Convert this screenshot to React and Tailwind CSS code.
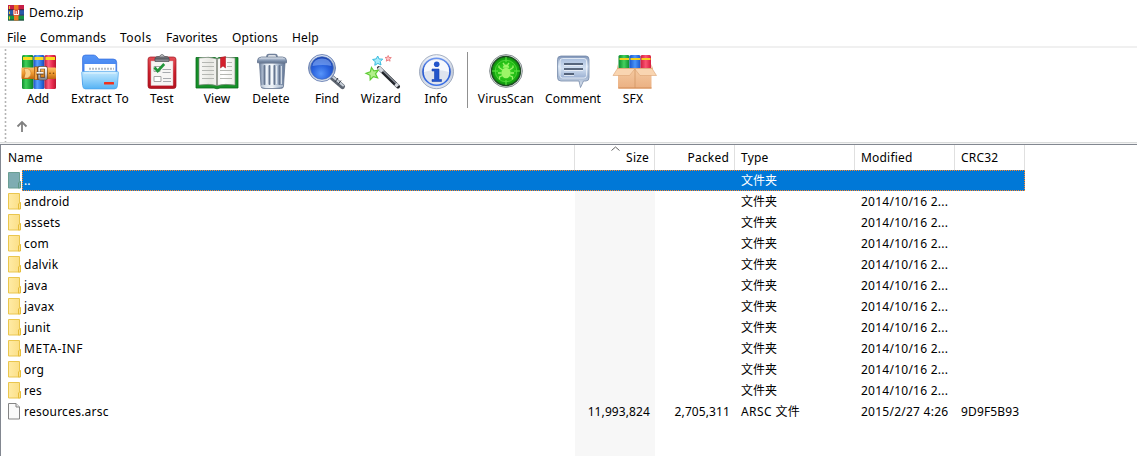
import React from 'react';

const Stops = ({ id, colors, h }) => (
  <linearGradient id={id} x1="0" y1="0" x2={h ? '1' : '0'} y2={h ? '0' : '1'}>
    {colors.map((c, i) => (
      <stop key={i} offset={i / (colors.length - 1)} stopColor={c} />
    ))}
  </linearGradient>
);

const Icon = ({ children }) => (
  <svg width="44" height="37" viewBox="0 0 44 37" className="block shrink-0 overflow-visible">
    {children}
  </svg>
);

const AddIcon = () => (
  <Icon>
    <defs>
      <Stops id="ag" h colors={['#0f8a2c', '#3fd05a', '#22ab3e', '#0b7a26']} />
      <Stops id="ab" h colors={['#1b4fc5', '#5aa2fa', '#2f78e8', '#1746b0']} />
      <Stops id="ar" h colors={['#c0183a', '#fa6080', '#ea2c50', '#b8142f']} />
      <Stops id="abelt" colors={['#fbc069', '#ee9a30', '#bd650f']} />
      <Stops id="asil" colors={['#ffffff', '#d5d8de', '#8b8e98']} />
    </defs>
    <rect x="6" y="2" width="11.5" height="34" rx="1.5" fill="url(#ag)" />
    <rect x="17.5" y="2" width="11" height="34" rx="1.5" fill="url(#ab)" />
    <rect x="28.5" y="2" width="11.5" height="34" rx="1.5" fill="url(#ar)" />
    <path d="M7 5.500h9.500M18.500 5.500h9M29.500 5.500h9.500" stroke="#f9dc1f" strokeWidth="3" />
    <rect x="5.500" y="14.500" width="34.500" height="11.500" rx="1" fill="url(#abelt)" />
    <path d="M8 15.500h3.500q3.500 1 3.500 4.700t-3.500 4.800h-3.500q2.500-4.800 0-9.500z" fill="#fbd08a" stroke="#c9741c" strokeWidth=".5" />
    <rect x="18" y="13.500" width="5" height="13.500" rx="1" fill="#9b500d" />
    <rect x="18.700" y="14" width="2.300" height="12.500" rx=".8" fill="#f2a544" />
    <rect x="23.300" y="14.700" width="6.700" height="11" rx=".5" fill="none" stroke="#5b4127" strokeWidth="3.200" />
    <rect x="23.300" y="14.700" width="6.700" height="11" rx=".5" fill="none" stroke="url(#asil)" strokeWidth="2" />
    <path d="M20.500 20.200h7" stroke="#6a4a2a" strokeWidth="3" />
    <path d="M20.500 19.800h7" stroke="#f4f5f7" strokeWidth="1.600" />
    <circle cx="34" cy="20.200" r=".8" fill="#7b3f0a" />
    <circle cx="37.500" cy="20.200" r=".8" fill="#7b3f0a" />
  </Icon>
);

const ExtractIcon = () => (
  <Icon>
    <defs>
      <Stops id="eb" colors={['#5797f7', '#2c6be6']} />
      <Stops id="ef" colors={['#c4e8fd', '#8fd0fa', '#55b2f4']} />
    </defs>
    <path d="M4.500 5q0-3 3-3h8q2 0 3.200 1.600l2 2.400h14.500q3.500 0 3.500 3.500v22h-34z" fill="url(#eb)" stroke="#255fd6" strokeWidth=".6" />
    <rect x="6.500" y="11" width="31" height="12" fill="#fff" />
    <path d="M11 15.700h25" stroke="#b3bac2" strokeWidth="2" strokeDasharray="2 1" />
    <path d="M4.500 18.500h4.500l2.500-.1h28q1 0 .9 1.500l-1 13q-.2 3-3 3h-29q-2.500 0-2.700-3l-1-13q0-1.400.8-1.400z" fill="url(#ef)" stroke="#4ba4ec" strokeWidth=".7" />
    <path d="M6 20h32" stroke="#e2f5ff" strokeWidth="1" />
    <rect x="26" y="29" width="10" height="2.600" rx=".5" fill="#f0321c" />
  </Icon>
);

const TestIcon = () => (
  <Icon>
    <defs>
      <Stops id="tr" colors={['#e34d55', '#cc1f2b', '#b5121f']} />
      <Stops id="tc" colors={['#f5f5f5', '#55585e', '#999ca2']} />
    </defs>
    <rect x="8" y="4" width="28" height="31.500" rx="2.500" fill="url(#tr)" stroke="#9f1620" strokeWidth=".7" />
    <path d="M11 8h22v24.500h-22z" fill="#f7f5f4" stroke="#d8b3b4" strokeWidth=".5" />
    <path d="M15 8.500q-1-5 3-5h1.500q1-2 2.500-2t2.500 2h1.500q4 0 3 5z" fill="url(#tc)" stroke="#494c52" strokeWidth=".7" />
    <path d="M14 13.500h6v5h-6zM14 23.500h7v5h-7z" fill="#fff" stroke="#a5a5a5" strokeWidth="1" />
    <path d="M14.500 14.500l3.200 3.500 6.500-7" fill="none" stroke="#209539" strokeWidth="2.600" />
    <path d="M22.500 16.500h8.500M22.500 19.500h8M23 25.500h8M23 28.500h8" stroke="#a8aaae" strokeWidth="1.100" />
  </Icon>
);

const ViewIcon = () => (
  <Icon>
    <defs>
      <Stops id="vp" h colors={['#f8f8f6', '#e7e7e2', '#ffffff', '#eeeeea']} />
    </defs>
    <path d="M1 4.500h19l2 1 2-1h19v30.500h-18l-3 .8-3-.8h-18z" fill="#159028" stroke="#08691a" strokeWidth=".8" />
    <path d="M4 5q10-2 18 1v26.500q-8-2-18-.5zM40 5q-10-2-18 1v26.500q8-2 18-.5z" fill="url(#vp)" stroke="#858b82" strokeWidth=".7" />
    <path d="M22 6.500v26" stroke="#7e8379" strokeWidth="1" />
    <path d="M7 9.500h12M7 13.500h12M7 17.500h12M7 21.500h12M7 25.500h12M25 17.500h12M25 21.500h12M25 25.500h12M32 9.500h5M32 13.500h5" fill="none" stroke="#b5b7b3" strokeWidth="1" />
    <path d="M25.500 4.500l5-1v11.500l-2.500-2-2.500 2z" fill="#d41f2c" stroke="#a40f1a" strokeWidth=".5" />
  </Icon>
);

const DeleteIcon = () => (
  <Icon>
    <defs>
      <Stops id="db" h colors={['#7386a3', '#dfe7f1', '#f6f9fc', '#a3b4cb', '#5f7291']} />
      <Stops id="dl" colors={['#f0f4f9', '#92a3bc', '#5c6f8d']} />
    </defs>
    <path d="M18 4q0-2.500 2-2.500h6q2 0 2 2.500" fill="none" stroke="#71819b" strokeWidth="1.700" />
    <path d="M10.500 10h25.500l-1.500 23q0 2.500-3 2.500h-16.500q-3 0-3-2.500z" fill="url(#db)" stroke="#65758f" strokeWidth=".8" />
    <path d="M15.500 13v18M20.500 13v18M25.500 13v18M30.500 13v18" stroke="#667791" strokeWidth="2" strokeLinecap="round" />
    <path d="M17.300 13v18M22.300 13v18M27.300 13v18M32.300 13v18" stroke="#f6f9fd" strokeWidth=".9" />
    <path d="M8.500 8q0-4 4-4h21q4 0 4 4v1.800h-29z" fill="url(#dl)" stroke="#61718b" strokeWidth=".8" />
    <path d="M12 33h22" stroke="#dfe6ee" strokeWidth="1" />
  </Icon>
);

const FindIcon = () => (
  <Icon>
    <defs>
      <radialGradient id="fg" cx=".45" cy=".75" r=".8">
        <stop offset="0" stopColor="#5795fa" />
        <stop offset=".5" stopColor="#2861dd" />
        <stop offset="1" stopColor="#173da7" />
      </radialGradient>
      <Stops id="fr" colors={['#dfe8f7', '#96a6c2', '#dfe6f0']} />
    </defs>
    <path d="M27 24.500l10.500 9" stroke="#5d6571" strokeWidth="5" strokeLinecap="round" />
    <path d="M28 24l10 8.500" stroke="#c9d0d9" strokeWidth="2" strokeLinecap="round" />
    <path d="M30 29l3-4M33 31.500l3-4" stroke="#343b46" strokeWidth="1" />
    <circle cx="17" cy="15" r="13.500" fill="url(#fr)" stroke="#5771ac" strokeWidth=".8" />
    <circle cx="17" cy="15" r="11.300" fill="url(#fg)" stroke="#4168bb" strokeWidth=".7" />
    <path d="M7.500 13q1-7.500 9.500-7.500t9.500 7.500q-8-2-19 0z" fill="#8eb5fa" opacity=".55" />
  </Icon>
);

const WizardIcon = () => (
  <Icon>
    <path d="M20 15l19 18.500" stroke="#22252b" strokeWidth="4" strokeLinecap="round" />
    <path d="M20.800 14.500l18.500 18" stroke="#8e949e" strokeWidth="1.200" />
    <path d="M19.500 14.500l4 4M36.500 31l2.300 2.300" stroke="#d7dae0" strokeWidth="3.600" />
    <path d="M12.500 14.500l2.300 3.400 4.400-.6-2.700 3.600 2.100 4-4.300-1.200-3.100 3.100-.2-4.500-4-2 4.300-1.500z" fill="#b2f08a" stroke="#5fcc35" strokeWidth="1.200" />
    <path d="M18.700 3l1.400 3 3.600.1-2.500 2.500.8 3.400-3.100-1.600-3.100 1.900.5-3.600-2.700-2.200 3.600-.6z" fill="#a7edfa" stroke="#38bbdf" strokeWidth="1" />
    <path d="M29.200 2.500l.8 2 2.300.1-1.700 1.500.5 2.100-1.900-1.100-1.900 1.100.4-2.200-1.600-1.500 2.300-.2z" fill="#ffc5c6" stroke="#e8787c" strokeWidth=".9" />
  </Icon>
);

const InfoIcon = () => (
  <Icon>
    <defs>
      <Stops id="ir" colors={['#f5f8fd', '#c2cbdc', '#e2e8f1']} />
      <Stops id="ii" colors={['#6d96f0', '#2556ce', '#3d73e8']} />
    </defs>
    <circle cx="22.500" cy="18.700" r="17" fill="url(#ir)" stroke="#8e9ab1" strokeWidth=".8" />
    <circle cx="22.500" cy="18.700" r="13.500" fill="#dfe4ee" stroke="url(#ii)" strokeWidth="1.600" />
    <path d="M10 19q0-12 12.500-12t12.500 12q-12.500-4-25 0z" fill="#f7f9fd" />
    <circle cx="22.700" cy="11.200" r="2.800" fill="#2355cb" />
    <path d="M18 16h7v10.500h2.500v2h-9.500v-2h2.500v-8.500h-2.500z" fill="#2355cb" stroke="#1b45ae" strokeWidth=".6" />
  </Icon>
);

const VirusIcon = () => (
  <Icon>
    <defs>
      <radialGradient id="vg">
        <stop offset="0" stopColor="#4be032" />
        <stop offset=".65" stopColor="#22bd14" />
        <stop offset="1" stopColor="#0c8a0d" />
      </radialGradient>
    </defs>
    <circle cx="22" cy="18" r="16.400" fill="#dfe2e3" stroke="#7d8588" strokeWidth=".9" />
    <circle cx="22" cy="18" r="14.500" fill="url(#vg)" stroke="#1d4a22" strokeWidth="1.300" />
    <circle cx="22" cy="18" r="10.800" fill="none" stroke="#58dc40" strokeWidth=".8" />
    <path d="M22 4v5M22 27v5M8 18h6M30 18h6" stroke="#62e946" strokeWidth="1" />
    <g stroke="#9bf36c" strokeWidth="1.300" fill="none">
      <path d="M18.500 17l-3.500-2.500v-2M25.500 17l3.500-2.500v-2M17.500 20h-3.500M26.500 20h3.500M18.500 22.500l-3 1.500v2.500M25.500 22.500l3 1.500v2.500M20.500 12l-1.500-2M23.500 12l1.500-2" />
    </g>
    <ellipse cx="22" cy="20" rx="4.600" ry="5.300" fill="#9cf568" />
    <path d="M18.800 14.700q.5-3.200 3.200-3.200t3.200 3.200z" fill="#9cf568" />
  </Icon>
);

const CommentIcon = () => (
  <Icon>
    <defs>
      <Stops id="cb" colors={['#7e94b8', '#d7e4f3', '#a1b4d0', '#eaf0f7']} />
      <Stops id="ci" colors={['#a9bedd', '#d2e0f1', '#9bb0d2']} />
    </defs>
    <path d="M10 3h25q3 0 3 3.500v18q0 3.500-3 3.500h-2.500l-3 6.500-1.500-6.500h-18q-3.500 0-3.500-3.500v-18q0-3.500 3.500-3.500z" fill="url(#cb)" stroke="#768aaa" strokeWidth=".8" />
    <rect x="9" y="5.500" width="26.500" height="19.500" rx="2.500" fill="url(#ci)" stroke="#f0f5fb" strokeWidth=".8" />
    <path d="M13 11h19M13 16h19M13 21h10" stroke="#35435a" strokeWidth="1.700" />
    <path d="M13 12.500h19M13 17.500h19M13 22.500h10" stroke="#f5f8fc" strokeWidth=".7" />
  </Icon>
);

const SfxIcon = () => (
  <Icon>
    <defs>
      <Stops id="sg" h colors={['#0a8c2b', '#45d060', '#0b8d2a']} />
      <Stops id="sb" h colors={['#1b55cc', '#4b95f8', '#1b55cc']} />
      <Stops id="sr" h colors={['#d01c3c', '#fa5472', '#d81c3e']} />
      <Stops id="sx" colors={['#f5c99f', '#eab083']} />
    </defs>
    <rect x="7.500" y="2" width="11" height="17" rx="1.500" fill="url(#sg)" />
    <rect x="18.500" y="2" width="11" height="17" rx="1.500" fill="url(#sb)" />
    <rect x="29.500" y="2" width="10.500" height="17" rx="1.500" fill="url(#sr)" />
    <path d="M8.500 6h9.500M19.500 6h9.500M30.500 6h9" stroke="#f6d21c" strokeWidth="2" />
    <path d="M7 11l-1 5.500h36l-1.500-5.500v4h-33.500z" fill="#dc9c64" />
    <path d="M7 16h33.500v19.500h-33.500z" fill="url(#sx)" />
    <path d="M6.500 15.500h34.500l4.500 7h-16.500l-5.200-6.500-5.300 6.500h-16.500z" fill="#f9d5b1" stroke="#dca373" strokeWidth=".6" />
    <path d="M24 16v19" stroke="#d29766" strokeWidth=".8" />
    <path d="M7.500 35h33" stroke="#d38a52" strokeWidth="1" />
  </Icon>
);

const AppIcon = () => (
  <svg width="16" height="16" viewBox="0 0 16 16" className="block">
    <rect width="16" height="5" fill="#c71f47" />
    <rect y="5" width="16" height="5.500" fill="#2959a8" />
    <rect y="10.500" width="16" height="5" fill="#159344" />
    <path d="M0 4.700h16M0 10.200h16M0 15h16" stroke="#26233a" strokeWidth=".8" />
    <path d="M1.500 1v3M1.500 6.500v2.500M1.500 11.500v3" stroke="#e8c434" />
    <rect x="6" width="4.500" height="15.500" fill="#ec7b24" />
    <rect x="5" y="4.500" width="6.500" height="6" rx=".5" fill="#d84a3e" />
    <path d="M6 5v4.500h4.500v-4.500M8.200 6v3.500" stroke="#fff" strokeWidth="1" fill="none" />
  </svg>
);

const FolderIcon = ({ selected }) => (
  <svg width="14" height="17" viewBox="0 0 14 17" className="block shrink-0">
    <defs>
      <Stops id="fold" h colors={['#ffeba5', '#fbdf87']} />
    </defs>
    <path d="M.5.500h11v15.500h-11z" fill={selected ? '#7eacb2' : 'url(#fold)'} stroke={selected ? '#6b9f94' : '#eac64e'} />
    <path d="M10.500 16v-5l1.500-1.500h.5v6.500z" fill={selected ? '#7eacb2' : '#fbe08a'} stroke={selected ? '#5e9783' : '#e6bd3a'} />
  </svg>
);

const FileIcon = () => (
  <svg width="14" height="17" viewBox="0 0 14 17" className="block shrink-0">
    <path d="M.5.500h7.500l3.500 3.500v12h-11z" fill="#fafafa" stroke="#858585" />
    <path d="M8 .500v3.500h3.500" fill="#e8e8e8" stroke="#858585" />
  </svg>
);

const MENU = [
  ['File', 'w-[33px]'],
  ['Commands', 'w-[80px] tracking-[0.2px]'],
  ['Tools', 'w-[46px] tracking-[0.5px]'],
  ['Favorites', 'w-[66px] tracking-[0.05px]'],
  ['Options', 'w-[60px] tracking-[0.2px]'],
  ['Help', 'w-[40px] tracking-[0.2px]'],
];

const TOOLS_A = [
  ['Add', 'w-[62px]', AddIcon],
  ['Extract To', 'w-[62px] tracking-[0.3px]', ExtractIcon],
  ['Test', 'w-[62px] tracking-[0.3px]', TestIcon],
  ['View', 'w-[48px]', ViewIcon],
  ['Delete', 'w-[60px] tracking-[0.2px]', DeleteIcon],
  ['Find', 'w-[52px]', FindIcon],
  ['Wizard', 'w-[56px] tracking-[0.3px]', WizardIcon],
  ['Info', 'w-[54px]', InfoIcon],
];

const TOOLS_B = [
  ['VirusScan', 'w-[70px] tracking-[0.15px]', VirusIcon],
  ['Comment', 'w-[64px]', CommentIcon],
  ['SFX', 'w-[56px] tracking-[0.3px]', SfxIcon],
];

const ROWS = [
  ...['android', 'assets', 'com', 'dalvik', 'java', 'javax', 'junit', 'META-INF', 'org', 'res'].map((name) => ({
    name,
    type: '文件夹',
    modified: '2014/10/16 2...',
  })),
  {
    name: 'resources.arsc',
    size: '11,993,824',
    packed: '2,705,311',
    type: 'ARSC 文件',
    modified: '2015/2/27 4:26',
    crc: '9D9F5B93',
    file: true,
  },
];

const GRID = 'grid grid-cols-[574px_80px_80px_120px_100px_70px] w-[1024px]';

const Tool = ({ label, width, Art }) => (
  <div className={`${width} flex shrink-0 flex-col items-center`}>
    <Art />
    <span className="mt-px whitespace-nowrap leading-[16px]">{label}</span>
  </div>
);

export default function App() {
  return (
    <div className="flex h-[456px] w-[1137px] flex-col overflow-hidden bg-white font-['Noto_Sans','Noto_Sans_CJK_SC',sans-serif] text-[12px] text-black">
      <div className="flex h-[25px] items-center pl-2">
        <AppIcon />
        <span className="ml-[5px] leading-4 tracking-[0.15px]">Demo.zip</span>
      </div>
      <div className="flex h-[21px] items-center pl-[7px] pt-[5px]">
        {MENU.map(([label, w]) => (
          <span key={label} className={`${w} leading-4`}>{label}</span>
        ))}
      </div>
      <div className="h-[2px] bg-[#f0f0f0]" />

      <div className="flex h-[94px]">
        <svg width="7" height="94" viewBox="0 0 7 94" className="block shrink-0">
          <path d="M5.500 1v93" stroke="#b4b4b4" strokeWidth="1.600" strokeDasharray="2 2" />
        </svg>
        <div className="flex flex-col">
          <div className="flex h-[60px] pt-[5px]">
            {TOOLS_A.map(([label, w, Art]) => (
              <Tool key={label} label={label} width={w} Art={Art} />
            ))}
            <div className="-mt-[1px] ml-1 mr-[3px] h-[56px] w-px bg-[#909090]" />
            {TOOLS_B.map(([label, w, Art]) => (
              <Tool key={label} label={label} width={w} Art={Art} />
            ))}
          </div>
          <div className="pl-[9px] pt-[12px]">
            <svg width="12" height="13" viewBox="0 0 12 13" className="block">
              <path d="M6 12V2M1.500 6.500L6 2l4.500 4.500" fill="none" stroke="#808080" strokeWidth="1.800" />
            </svg>
          </div>
        </div>
      </div>
      <div className="h-[2px] border-t border-[#d9dbdb] bg-[#f3f3f3]" />

      <div className="flex flex-1 flex-col border-l border-t border-[#828790] bg-[linear-gradient(#f7f7f7,#f7f7f7)] bg-[length:80px_100%] bg-[position:574px_25px] bg-no-repeat">
        <div className={`${GRID} h-[25px] items-stretch leading-[25px] tracking-[0.2px]`}>
          <div className="border-r border-[#e0e0e0] pl-[7px]">Name</div>
          <div className="relative border-r border-[#e0e0e0] pr-[5px] text-right">
            Size
            <svg width="9" height="5" viewBox="0 0 9 5" className="absolute left-[36px] top-[1px]">
              <path d="M.5 4.500l4-3.500 4 3.500" fill="none" stroke="#606060" />
            </svg>
          </div>
          <div className="border-r border-[#e0e0e0] pr-[5px] text-right">Packed</div>
          <div className="border-r border-[#e0e0e0] pl-[6px]">Type</div>
          <div className="border-r border-[#e0e0e0] pl-[6px]">Modified</div>
          <div className="border-r border-[#e0e0e0] pl-[6px]">CRC32</div>
        </div>

        <div className="flex h-[21px] w-[1024px] text-white">
          <div className="flex w-[21px] shrink-0 items-center bg-white pl-[7px]">
            <FolderIcon selected />
          </div>
          <div className="flex flex-1 border border-dotted border-[#ff8728] bg-[#0078d7] leading-[19px]">
            <span className="w-[718px] pl-[1px]">..</span>
            <span>文件夹</span>
          </div>
        </div>

        {ROWS.map((r) => (
          <div key={r.name} className={`${GRID} h-[21px] whitespace-nowrap leading-[21px]`}>
            <div className="flex items-center pl-[7px]">
              {r.file ? <FileIcon /> : <FolderIcon />}
              <span className={r.name === 'META-INF' ? 'ml-[2px] tracking-[0.6px]' : 'ml-[2px] tracking-[0.25px]'}>{r.name}</span>
            </div>
            <div className="pr-[5px] text-right tracking-[0.1px]">{r.size}</div>
            <div className="pr-[5px] text-right tracking-[0.1px]">{r.packed}</div>
            <div className={r.file ? 'pl-[6px] tracking-[0.4px]' : 'pl-[6px]'}>{r.type}</div>
            <div className="pl-[6px] tracking-[0.25px]">{r.modified}</div>
            <div className="pl-[6px] tracking-[0.15px]">{r.crc}</div>
          </div>
        ))}
      </div>
    </div>
  );
}
